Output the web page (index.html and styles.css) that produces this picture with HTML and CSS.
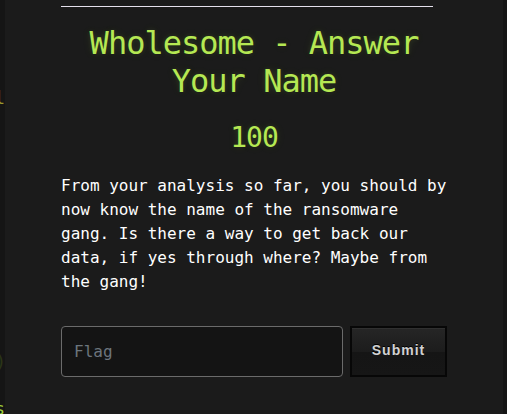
FILE: index.html
```html
<!DOCTYPE html>
<html lang="en">
<head>
<meta charset="utf-8">
<meta name="viewport" content="width=device-width, initial-scale=1">
<title>Challenge</title>
<link rel="stylesheet" href="styles.css">
</head>
<body>
<div class="board" aria-hidden="true">
  <span class="peek peek-top">l</span>
  <span class="peek peek-dim">)</span>
  <span class="peek peek-bottom">s</span>
</div>
<main class="modal">
  <hr class="rule">
  <h1 class="title">Wholesome - Answer Your Name</h1>
  <h2 class="points">100</h2>
  <p class="description">From your analysis so far, you should by now know the name of the ransomware gang. Is there a way to get back our data, if yes through where? Maybe from the gang!</p>
  <form class="answer">
    <input class="flag" type="text" placeholder="Flag" aria-label="Flag">
    <button class="submit" type="button">Submit</button>
  </form>
</main>
</body>
</html>
```
FILE: styles.css
```css
* {
  box-sizing: border-box;
}

body {
  margin: 0;
  min-height: 100vh;
  padding: 0 4px 0 5px;
  display: flex;
  background: #151515;
  color: #fff;
  font: 16px/24px "DejaVu Sans Mono", monospace;
}

/* Challenge board showing past the left edge of the modal */
.board {
  position: absolute;
  top: 0;
  left: 0;
  width: 4px;
  height: 100vh;
  overflow: hidden;
}

.peek {
  position: absolute;
  right: 0;
  color: #9fce3c;
  font-size: 18px;
}

.peek-top {
  top: 86px;
  right: -1px;
  color: #9a9a2c;
}

.peek-dim {
  top: 350px;
  right: -2px;
  color: #2b3517;
}

.peek-bottom {
  top: 397px;
  right: -1px;
}

.modal {
  flex: 1;
  padding: 6px 56px 0;
  background: #1b1b1b;
}

.rule {
  height: 1px;
  margin: 0 14px 17px 0;
  border: 0;
  background: #e4e0ec;
}

.title,
.points {
  margin: 0;
  color: #b5e853;
  font-weight: 400;
  letter-spacing: -1px;
  text-align: center;
  text-shadow: 0 1px 1px rgba(0, 0, 0, 0.1), 0 0 5px rgba(181, 232, 83, 0.1),
    0 0 10px rgba(181, 232, 83, 0.1);
}

.title {
  font-size: 32px;
  line-height: 38px;
}

.points {
  margin: 21px 0 19px;
  font-size: 28px;
  line-height: 34px;
}

.description {
  margin: 0 0 32px;
}

.answer {
  display: flex;
  gap: 7px;
}

.flag {
  flex: 1;
  min-width: 0;
  height: 51px;
  padding: 0 12px;
  border: 1px solid #6b6b6b;
  border-radius: 4px;
  background: #141414;
  color: #fff;
  font: inherit;
}

.flag::placeholder {
  color: #6c757d;
  opacity: 1;
}

.submit {
  width: 97px;
  height: 51px;
  padding: 0 0 4px;
  border: 2px solid #070707;
  background: linear-gradient(#262626, #1c1c1c 50%, #151515 50%, #161616);
  box-shadow: inset 0 1px 0 #303030;
  color: #d2d2d2;
  font: 700 14px/20px "Liberation Sans", Arial, sans-serif;
  letter-spacing: 1px;
  text-shadow: 0 -1px 0 #000;
}
```
